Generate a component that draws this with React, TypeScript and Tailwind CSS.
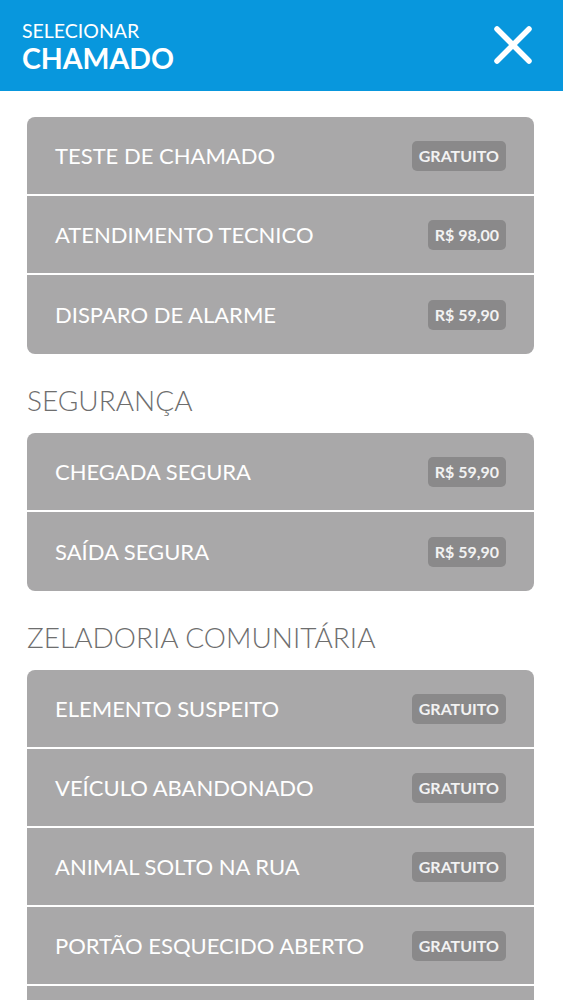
type Item = { name: string; price: string };

const general: Item[] = [
  { name: 'TESTE DE CHAMADO', price: 'GRATUITO' },
  { name: 'ATENDIMENTO TECNICO', price: 'R$ 98,00' },
  { name: 'DISPARO DE ALARME', price: 'R$ 59,90' },
];

const seguranca: Item[] = [
  { name: 'CHEGADA SEGURA', price: 'R$ 59,90' },
  { name: 'SAÍDA SEGURA', price: 'R$ 59,90' },
];

const zeladoria: Item[] = [
  { name: 'ELEMENTO SUSPEITO', price: 'GRATUITO' },
  { name: 'VEÍCULO ABANDONADO', price: 'GRATUITO' },
  { name: 'ANIMAL SOLTO NA RUA', price: 'GRATUITO' },
  { name: 'PORTÃO ESQUECIDO ABERTO', price: 'GRATUITO' },
];

function Card({ items, more = false }: { items: Item[]; more?: boolean }) {
  return (
    <div className="flex flex-col divide-y-2 divide-white overflow-hidden rounded-lg bg-[#a9a8a9]">
      {items.map((item) => (
        <button
          key={item.name}
          className="flex h-[79px] shrink-0 items-center justify-between pl-7 pr-7 text-left"
        >
          <span className="text-[22px] text-white">{item.name}</span>
          <span className="rounded-[5px] bg-[#8a898a] px-[7px] py-[5px] text-[16px] font-bold leading-5 text-[#f2f2f2]">
            {item.price}
          </span>
        </button>
      ))}
      {more && <div className="h-[79px] shrink-0" />}
    </div>
  );
}

function SectionTitle({ children }: { children: string }) {
  return (
    <h3 className="h-[79px] pt-[28px] text-[28px] font-light leading-9 text-[#6e6e6e]">
      {children}
    </h3>
  );
}

export default function App() {
  return (
    <div className="h-[1000px] overflow-hidden bg-white font-['Lato','Open_Sans',sans-serif]">
      <header className="flex h-[91px] items-center justify-between bg-[#0897dd] pl-[22px] pr-[30px]">
        <div className="flex flex-col pt-[2px] text-white">
          <span className="text-[19.5px] leading-[22px]">SELECIONAR</span>
          <span className="text-[28.5px] font-bold leading-[32px]">CHAMADO</span>
        </div>
        <svg width="40" height="40" viewBox="0 0 40 40" className="mb-[2px]">
          <path
            d="M4 4 L36 36 M36 4 L4 36"
            stroke="white"
            strokeWidth="5.5"
            strokeLinecap="round"
            fill="none"
          />
        </svg>
      </header>

      <main className="pl-[27px] pr-[29px] pt-[26px]">
        <Card items={general} />
        <SectionTitle>SEGURANÇA</SectionTitle>
        <Card items={seguranca} />
        <SectionTitle>ZELADORIA COMUNITÁRIA</SectionTitle>
        <Card items={zeladoria} more />
      </main>
    </div>
  );
}
